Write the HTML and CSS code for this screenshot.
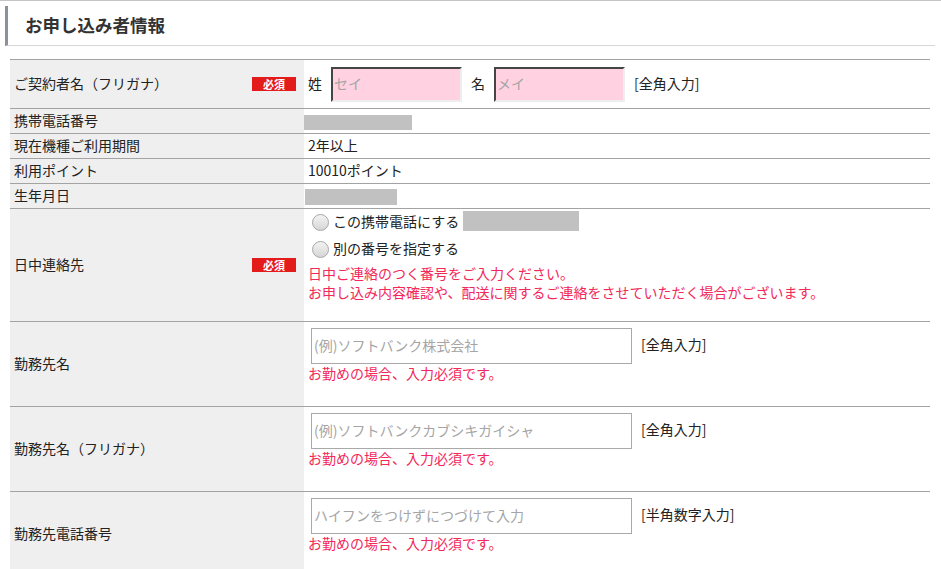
FILE: index.html
```html
<!DOCTYPE html>
<html lang="ja">
<head>
<meta charset="utf-8">
<title>お申し込み者情報</title>
<link rel="stylesheet" href="styles.css">
</head>
<body>
<div class="page">
  <h2 class="heading">お申し込み者情報</h2>
  <table class="form">
    <tr class="r-name">
      <th><div class="lab"><span>ご契約者名（フリガナ）</span><span class="req">必須</span></div></th>
      <td>
        <div class="inline">
          <span>姓</span>
          <input class="kana" type="text" placeholder="セイ">
          <span>名</span>
          <input class="kana" type="text" placeholder="メイ">
          <span>[全角入力]</span>
        </div>
      </td>
    </tr>
    <tr class="r-s">
      <th><div class="lab"><span>携帯電話番号</span></div></th>
      <td><span class="mask mask-tel"></span></td>
    </tr>
    <tr class="r-s">
      <th><div class="lab"><span>現在機種ご利用期間</span></div></th>
      <td>2年以上</td>
    </tr>
    <tr class="r-s">
      <th><div class="lab"><span>利用ポイント</span></div></th>
      <td>10010ポイント</td>
    </tr>
    <tr class="r-s">
      <th><div class="lab"><span>生年月日</span></div></th>
      <td><span class="mask mask-birth"></span></td>
    </tr>
    <tr class="r-contact">
      <th><div class="lab"><span>日中連絡先</span><span class="req">必須</span></div></th>
      <td class="top">
        <label class="radio"><span class="dot"></span><span>この携帯電話にする</span><span class="mask mask-radio"></span></label>
        <label class="radio"><span class="dot"></span><span>別の番号を指定する</span></label>
        <p class="warn">日中ご連絡のつく番号をご入力ください。<br>お申し込み内容確認や、配送に関するご連絡をさせていただく場合がございます。</p>
      </td>
    </tr>
    <tr class="r-work">
      <th><div class="lab"><span>勤務先名</span></div></th>
      <td class="top">
        <div class="inline"><input class="wide" type="text" placeholder="(例)ソフトバンク株式会社"><span class="note">[全角入力]</span></div>
        <p class="warn">お勤めの場合、入力必須です。</p>
      </td>
    </tr>
    <tr class="r-work">
      <th><div class="lab"><span>勤務先名（フリガナ）</span></div></th>
      <td class="top">
        <div class="inline"><input class="wide" type="text" placeholder="(例)ソフトバンクカブシキガイシャ"><span class="note">[全角入力]</span></div>
        <p class="warn">お勤めの場合、入力必須です。</p>
      </td>
    </tr>
    <tr class="r-work">
      <th><div class="lab"><span>勤務先電話番号</span></div></th>
      <td class="top">
        <div class="inline"><input class="wide" type="text" placeholder="ハイフンをつけずにつづけて入力"><span class="note">[半角数字入力]</span></div>
        <p class="warn">お勤めの場合、入力必須です。</p>
      </td>
    </tr>
  </table>
</div>
</body>
</html>
```
FILE: styles.css
```css
html, body {
  margin: 0;
  padding: 0;
  background: #fff;
}
body {
  font-family: "Noto Sans CJK JP", "Noto Sans", sans-serif;
  font-size: 14px;
  color: #222;
  border-top: 1px solid #c4c4c4;
  overflow: hidden;
}
.page {
  padding: 5px 6px 0 5px;
}
.heading {
  margin: 0;
  height: 39px;
  border-left: 3px solid #8d9199;
  border-bottom: 1px solid #d8d8d8;
  padding-left: 17px;
  font-size: 17.5px;
  font-weight: bold;
  color: #333;
  line-height: 37px;
}
.form {
  margin: 13px 0 0 5px;
  width: 920px;
  border-collapse: collapse;
  border-top: 1px solid #a3a3a3;
}
.form tr {
  border-bottom: 1px solid #a3a3a3;
}
.form th {
  width: 294px;
  box-sizing: border-box;
  background: #efefef;
  padding: 0 8px 0 4px;
  text-align: left;
  font-weight: normal;
  vertical-align: middle;
}
.form td {
  padding: 0 0 0 4px;
  vertical-align: middle;
  line-height: 20px;
}
.form td.top {
  vertical-align: top;
}
.lab {
  display: flex;
  justify-content: space-between;
  align-items: center;
  line-height: 20px;
}
.lab > span:first-child {
  padding-bottom: 3px;
}
.req {
  display: inline-block;
  width: 44px;
  height: 14px;
  background: #e31b1b;
  color: #fff;
  font-size: 11px;
  font-weight: bold;
  line-height: 14px;
  text-align: center;
}
.r-name th { height: 48px; }
.r-name td { height: 48px; }
.r-s th { height: 24px; }
.r-s td { height: 21px; padding-bottom: 3px; }
.r-contact th, .r-contact td { height: 113px; }
.r-work th, .r-work td { height: 85px; }
.r-contact td { padding-top: 1px; box-sizing: border-box; }
.r-work td { padding-top: 6px; box-sizing: border-box; }

.inline {
  display: flex;
  align-items: center;
}
.inline > span {
  padding-bottom: 3px;
}
.inline input.kana {
  box-sizing: border-box;
  width: 131px;
  height: 35px;
  margin: 0 9px 0 9px;
  border: 2px inset #999;
  border-color: #999 #eee #eee #999;
  background: #ffd1e1;
  padding: 0 1px 2px;
  font-family: "Noto Sans CJK JP", sans-serif;
  font-size: 14px;
  outline: none;
}
input::placeholder {
  color: #a5a5a5;
}
.inline input.wide {
  box-sizing: border-box;
  width: 321px;
  height: 36px;
  margin-left: 3px;
  border: 1px solid #a9a9a9;
  background: #fff;
  padding: 0 2px 2px;
  font-family: "Noto Sans CJK JP", sans-serif;
  font-size: 14px;
  outline: none;
}
.note {
  margin-left: 9px;
  margin-top: -2px;
}
.warn {
  margin: 0;
  color: #f3285a;
  line-height: 19px;
}
.radio {
  display: flex;
  align-items: center;
  height: 24px;
  margin-bottom: 3px;
}
.radio > span:nth-child(2) {
  padding-bottom: 2px;
}
.dot {
  box-sizing: border-box;
  width: 17px;
  height: 17px;
  margin: 0 4px 0 4px;
  border-radius: 50%;
  border: 1px solid #a8a8a8;
  background: linear-gradient(#f3f3f3, #d6d6d6);
}
.mask {
  display: inline-block;
  background: #c1c1c1;
  vertical-align: middle;
}
.mask-tel {
  width: 108px;
  height: 15px;
  margin-left: -4px;
  margin-top: 2px;
}
.mask-birth {
  width: 92px;
  height: 16px;
  margin-left: -3px;
  margin-top: 2px;
}
.mask-radio {
  width: 116px;
  height: 20px;
  margin-left: 4px;
  margin-top: -2px;
}
```
